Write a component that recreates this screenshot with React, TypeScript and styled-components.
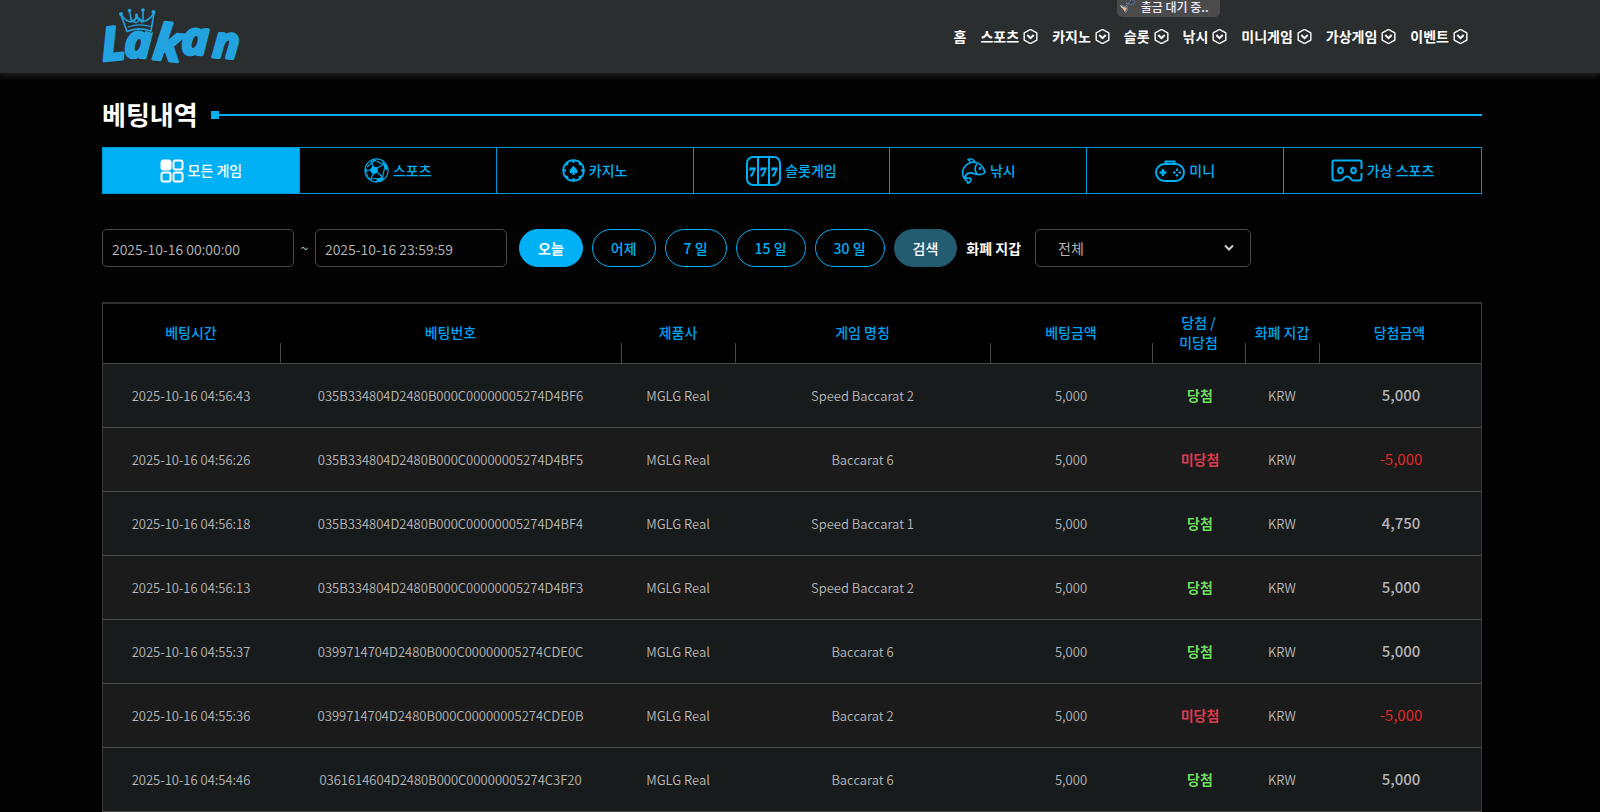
import React from 'react';
import styled, { createGlobalStyle } from 'styled-components';

const ACCENT = '#00b0f4';

const GlobalStyle = createGlobalStyle`
  *, *::before, *::after { box-sizing: border-box; }
  body {
    margin: 0;
    background: #020202;
    color: #b4b4b4;
    font-family: "Noto Sans CJK KR", "Noto Sans", sans-serif;
    font-size: 14px;
    line-height: 20px;
  }
  button, input, select { font: inherit; }
`;

const Header = styled.header`
  display: flex;
  justify-content: space-between;
  align-items: flex-start;
  height: 73px;
  padding: 0 132px 0 102px;
  background: #2a2e2f;
  box-shadow: 0 2px 8px #2a2a2a;
`;

const LogoLink = styled.a`
  display: block;
  padding-top: 6px;
  > svg {
    display: block;
    overflow: visible;
  }
`;

const NavList = styled.ul`
  display: flex;
  gap: 14px;
  margin: 0;
  padding: 26px 0 0;
  list-style: none;
`;

const NavItem = styled.li`
  position: relative;
`;

const NavLink = styled.a`
  display: flex;
  align-items: center;
  gap: 4px;
  color: #fff;
  font-weight: 700;
  white-space: nowrap;
  text-decoration: none;
`;

const StatusBadge = styled.div`
  position: absolute;
  left: -7px;
  bottom: 29px;
  display: flex;
  align-items: center;
  gap: 5px;
  height: 20px;
  padding: 0 11px 0 3px;
  border-radius: 0 0 5px 5px;
  background: #4b4b4b;
  color: #f0ecff;
  font-size: 12px;
  font-weight: 500;
  white-space: nowrap;
`;

const Main = styled.main`
  padding: 25px 118px 0 102px;
`;

const TitleRow = styled.div`
  display: flex;
  align-items: center;
  gap: 13px;
  height: 32px;
`;

const Title = styled.h1`
  margin: 0;
  color: #fff;
  font-size: 26px;
  font-weight: 700;
  line-height: 32px;
`;

const TitleRule = styled.div`
  flex: 1;
  display: flex;
  align-items: center;
  padding-top: 2px;
  &::before {
    content: '';
    width: 8px;
    height: 8px;
    background: ${ACCENT};
  }
  &::after {
    content: '';
    flex: 1;
    height: 2px;
    background: ${ACCENT};
  }
`;

const Tabs = styled.div`
  display: grid;
  grid-template-columns: repeat(7, 1fr);
  height: 47px;
  margin-top: 17px;
  border: 1px solid #0099d6;
`;

const Tab = styled.button<{ $active?: boolean }>`
  display: flex;
  align-items: center;
  justify-content: center;
  gap: 4px;
  padding: 0;
  border: 0;
  border-right: 1px solid #0099d6;
  background: ${(p) => (p.$active ? ACCENT : 'transparent')};
  color: ${(p) => (p.$active ? '#fff' : ACCENT)};
  font-weight: 500;
  cursor: pointer;
  &:last-child { border-right: 0; }
`;

const TabLabel = styled.span`
  padding-bottom: 2px;
`;

const Filters = styled.form`
  display: flex;
  align-items: center;
  gap: 9px;
  margin-top: 35px;
`;

const DateRange = styled.div`
  display: flex;
  align-items: center;
  margin-right: 3px;
`;

const DateInput = styled.input`
  width: 192px;
  height: 38px;
  padding: 2px 9px 0;
  border: 1px solid #484848;
  border-radius: 5px;
  background: transparent;
  color: #b8b8b8;
  font-weight: 350;
`;

const Tilde = styled.span`
  width: 21px;
  text-align: center;
`;

const PillButton = styled.button<{ $tone?: 'active' | 'search' }>`
  height: 38px;
  padding: 0 18px;
  border: 1px solid ${(p) => (p.$tone === 'search' ? '#235b70' : ACCENT)};
  border-radius: 19px;
  background: ${(p) =>
    p.$tone === 'active' ? ACCENT : p.$tone === 'search' ? '#235b70' : 'transparent'};
  color: ${(p) => (p.$tone ? '#fff' : ACCENT)};
  font-weight: ${(p) => (p.$tone === 'active' ? 700 : 500)};
  cursor: pointer;
`;

const WalletLabel = styled.label`
  margin-right: 5px;
  color: #fff;
  font-weight: 700;
`;

const SelectBox = styled.div`
  display: grid;
  align-items: center;
  width: 216px;
  > * { grid-area: 1 / 1; }
  > svg {
    justify-self: end;
    margin-right: 17px;
    pointer-events: none;
  }
`;

const Select = styled.select`
  width: 100%;
  height: 38px;
  padding: 0 22px;
  border: 1px solid #484848;
  border-radius: 5px;
  background: #020202;
  color: #b4b4b4;
  appearance: none;
`;

const Table = styled.table`
  width: 100%;
  margin-top: 35px;
  table-layout: fixed;
  border-collapse: separate;
  border-spacing: 0;
  border: 1px solid #3c3c3c;
  border-top: 2px solid #303030;
`;

const HeadCell = styled.th`
  height: 60px;
  padding: 0 22px 3px 20px;
  border-bottom: 1px solid #4a4a4a;
  background:
    linear-gradient(#484848, #484848) right bottom / 1px 20px no-repeat,
    #000;
  color: #00a2f2;
  font-weight: 500;
  word-break: keep-all;
  &:last-child { background: #000; }
`;

const NarrowHeadCell = styled(HeadCell)`
  padding: 0 2px 3px 0;
`;

const Row = styled.tr`
  background: #181b1c;
  &:nth-child(even) { background: #1b1b1b; }
`;

const Cell = styled.td`
  height: 64px;
  padding: 1px 2px 0 0;
  border-bottom: 1px solid #4a4a4a;
  color: #b8b8b8;
  font-size: 13px;
  font-weight: 350;
  text-align: center;
`;

const ResultCell = styled(Cell)<{ $won: boolean }>`
  padding: 0 0 1px 1px;
  color: ${(p) => (p.$won ? '#6bdc5c' : '#d93b50')};
  font-size: 14px;
  font-weight: 700;
`;

const AmountCell = styled(Cell)<{ $won: boolean }>`
  padding: 0 0 1px 1px;
  color: ${(p) => (p.$won ? '#b4b4b4' : '#e3262a')};
  font-size: 15px;
  font-weight: ${(p) => (p.$won ? 500 : 400)};
`;

const Logo = () => (
  <svg width="140" height="60" viewBox="0 0 140 60" role="img" aria-label="Lakan">
    <g
      fill="#22a3e0"
      stroke="#22a3e0"
      strokeWidth="3"
      strokeLinejoin="round"
      fontFamily="'Open Sans', sans-serif"
      fontStyle="italic"
      fontWeight="700"
    >
      <text x="1" y="55" fontSize="46" transform="rotate(-6 1 55)">L</text>
      <text x="22" y="51" fontSize="46" transform="rotate(2 22 51)">a</text>
      <text x="50" y="53" fontSize="50" transform="rotate(6 50 53)">k</text>
      <text x="79" y="48" fontSize="46" transform="rotate(2 79 48)">a</text>
      <text x="110" y="51" fontSize="44" transform="rotate(4 110 51)">n</text>
    </g>
    <path
      d="M17 6 25 25Q36 17 49 24L52 9Q48 16 42 16L41 3Q41 13 34 10Q35 15 29 13L25 4Q28 15 22 16Z"
      fill="#2a2e2f"
      stroke="#2a2e2f"
      strokeWidth="5"
      strokeLinejoin="round"
    />
    <g fill="none" stroke="#22a3e0" strokeWidth="1.6" strokeLinejoin="round" strokeLinecap="round">
      <path d="M19 9 25 25.500Q36 20.500 49 25L52 7" />
      <path d="M20 10Q26 17 30 15.500 28 9 27.500 5.500M30 15.500Q35 14 34.500 9.500 36 15 41 15.500L41 5M41 15.500Q47 15 52 7" />
      <path d="M26 21Q37 17 49 20.500M28 13 34 17 39 13M34.500 10 31 16M35 10 40 17" strokeWidth="1.2" />
    </g>
    <g fill="#22a3e0">
      <circle cx="19" cy="8" r="2" />
      <circle cx="27.500" cy="4.500" r="1.800" />
      <circle cx="34.500" cy="9" r="1.600" />
      <circle cx="41" cy="4" r="1.800" />
      <circle cx="51.500" cy="6" r="2" />
    </g>
  </svg>
);

const HexChevron = () => (
  <svg width="15" height="15" viewBox="0 0 14 14" fill="none" stroke="#fff" strokeWidth="1.3" aria-hidden>
    <path d="M7 .4 12.900 3.700V10.300L7 13.600 1.100 10.300V3.700Z" strokeLinejoin="round" />
    <path d="M4 5.600 7 8.500 10 5.600" strokeWidth="1.800" />
  </svg>
);

const HammerIcon = () => (
  <svg width="16" height="18" viewBox="0 0 16 18" aria-hidden>
    <path d="M6 5Q10 7 11 1L15 4Q14 7 8 6Z" fill="#3a4048" stroke="#63739d" />
    <path d="M1 8 7 10 5 14Z" fill="#e9b98a" />
    <path d="M1 7 5 9 7 7 7 13 5 15" fill="none" stroke="#7483ad" />
    <path d="M.5 7.500 2.500 10" stroke="#eee" />
  </svg>
);

const GridIcon = () => (
  <svg width="24" height="24" viewBox="0 0 24 24" fill="none" stroke="currentColor" strokeWidth="2" aria-hidden>
    <rect x="1.500" y="1.500" width="9" height="9" rx="2" fill="currentColor" />
    <rect x="13.500" y="1.500" width="9" height="9" rx="2" />
    <rect x="1.500" y="13.500" width="9" height="9" rx="2" />
    <rect x="13.500" y="13.500" width="9" height="9" rx="2" />
  </svg>
);

const SoccerIcon = () => (
  <svg width="25" height="25" viewBox="0 0 25 25" fill="none" stroke="currentColor" strokeWidth="1.100" aria-hidden>
    <circle cx="12.500" cy="12.500" r="11.600" />
    <g fill="currentColor" stroke="none">
      <path d="M8.500 8 13.800 9.500 14 14.500 9 16.500 5.500 12.300Z" />
      <path d="M18 2.500 23 8 23.500 13 20.500 10.500 19 6.500Z" />
      <path d="M13 20.500 18.500 19 20 20.500 16.500 23.500 12 23.500Z" />
      <path d="M6 3.500 11 1.500 12.500 3 8 4.500Z" />
      <path d="M1.500 9 3 12 2.500 16 1 12.500Z" />
      <path d="M4 18.500 7 21 8 23 4.500 20.500Z" />
    </g>
    <path d="M9 8.500 8 4.500M13.500 10 19 6.500M13.500 14.500 18.500 19M9 16 7 21M6 12.300H3M12.500 3 19 6.500M20.500 10.500 18.500 19M7 21 13 20.500M2.500 16 4 18.500M8 4.500 3 9" />
  </svg>
);

const ChipIcon = () => (
  <svg width="23" height="23" viewBox="0 0 23 23" fill="none" stroke="currentColor" aria-hidden>
    <circle cx="11.500" cy="11.500" r="10.300" strokeWidth="1.800" />
    <path
      d="M11.500 1V3.800M11.500 19.200V22M1 11.500H3.800M19.200 11.500H22M4.100 4.100 5.900 5.900M17.100 17.100 18.900 18.900M4.100 18.900 5.900 17.100M17.100 5.900 18.900 4.100"
      strokeWidth="2.400"
    />
    <path
      d="M11.500 6.500C10.500 8.500 7.500 10 7.500 12.500 7.500 14.800 10 15 11 13.800L10 16H13L12 13.800C13 15 15.500 14.800 15.500 12.500 15.500 10 12.500 8.500 11.500 6.500Z"
      fill="currentColor"
      stroke="none"
    />
  </svg>
);

const SlotIcon = () => (
  <svg width="35" height="30" viewBox="0 0 35 30" fill="none" stroke="currentColor" strokeWidth="2" aria-hidden>
    <rect x="1" y="1" width="33" height="28" rx="6" />
    <path d="M12 1V29M23 1V29" />
    <g
      fill="currentColor"
      strokeWidth="0.8"
      fontFamily="'Liberation Serif', serif"
      fontSize="13"
      fontWeight="700"
      textAnchor="middle"
    >
      <text x="6.500" y="20">7</text>
      <text x="17.500" y="20">7</text>
      <text x="28.500" y="20">7</text>
    </g>
  </svg>
);

const FishIcon = () => (
  <svg width="25" height="26" viewBox="0 0 25 26" fill="none" stroke="currentColor" strokeWidth="1.600" strokeLinejoin="round" aria-hidden>
    <path d="M10 4.500C17 3.500 22 7 24 14.500 22 16.500 18 17 14 16 9 14 5 14.500 4 19.500 6 21 9.500 19 10 21 9.500 24 7.500 25 6.500 25 6.500 23.500 5.500 22 4.500 22 0 17 0 8 10 4.500Z" />
    <path d="M10 4.500 7 1.500C10 .5 13 1.500 14 4.500" />
    <path d="M16 6C13.500 9 13.500 12.500 16 16" />
    <circle cx="19" cy="10.500" r=".6" fill="currentColor" />
  </svg>
);

const GamepadIcon = () => (
  <svg width="30" height="22" viewBox="0 0 30 22" fill="none" stroke="currentColor" strokeWidth="1.900" aria-hidden>
    <rect x="1" y="4" width="28" height="17" rx="8.500" />
    <path d="M10.500 4V1.500H19.500V4" />
    <path d="M8 9V16M4.500 12.500H11.500" strokeWidth="2.600" />
    <g fill="currentColor" stroke="none">
      <circle cx="22" cy="9.700" r="1.300" />
      <circle cx="22" cy="15.300" r="1.300" />
      <circle cx="19.200" cy="12.500" r="1.300" />
      <circle cx="24.800" cy="12.500" r="1.300" />
    </g>
  </svg>
);

const VrIcon = () => (
  <svg width="32" height="23" viewBox="0 0 32 23" fill="none" stroke="currentColor" strokeWidth="2" strokeLinejoin="round" aria-hidden>
    <path d="M30.500 10V3Q30.500 1.500 29 1.500H3Q1.500 1.500 1.500 3V19Q1.500 21.500 4 21.500H9Q11 21.500 12 20L13.500 18.500Q16 16.500 18.500 18.500L20 20Q21 21.500 23 21.500H28Q30.500 21.500 30.500 19V14" />
    <ellipse cx="9.500" cy="11.500" rx="2.300" ry="2.800" />
    <ellipse cx="22.500" cy="11.500" rx="2.300" ry="2.800" />
  </svg>
);

const navItems = ['홈', '스포츠', '카지노', '슬롯', '낚시', '미니게임', '가상게임', '이벤트'];

const tabs = [
  { label: '모든 게임', Icon: GridIcon },
  { label: '스포츠', Icon: SoccerIcon },
  { label: '카지노', Icon: ChipIcon },
  { label: '슬롯게임', Icon: SlotIcon },
  { label: '낚시', Icon: FishIcon },
  { label: '미니', Icon: GamepadIcon },
  { label: '가상 스포츠', Icon: VrIcon },
];

const columnWidths = [178, 341, 114, 255, 162, 93, 74, 161];

const bets = [
  { time: '2025-10-16 04:56:43', id: '035B334804D2480B000C00000005274D4BF6', game: 'Speed Baccarat 2', won: true, payout: '5,000' },
  { time: '2025-10-16 04:56:26', id: '035B334804D2480B000C00000005274D4BF5', game: 'Baccarat 6', won: false, payout: '-5,000' },
  { time: '2025-10-16 04:56:18', id: '035B334804D2480B000C00000005274D4BF4', game: 'Speed Baccarat 1', won: true, payout: '4,750' },
  { time: '2025-10-16 04:56:13', id: '035B334804D2480B000C00000005274D4BF3', game: 'Speed Baccarat 2', won: true, payout: '5,000' },
  { time: '2025-10-16 04:55:37', id: '0399714704D2480B000C00000005274CDE0C', game: 'Baccarat 6', won: true, payout: '5,000' },
  { time: '2025-10-16 04:55:36', id: '0399714704D2480B000C00000005274CDE0B', game: 'Baccarat 2', won: false, payout: '-5,000' },
  { time: '2025-10-16 04:54:46', id: '0361614604D2480B000C00000005274C3F20', game: 'Baccarat 6', won: true, payout: '5,000' },
];

export default function App() {
  return (
    <>
      <GlobalStyle />
      <Header>
        <LogoLink href="#">
          <Logo />
        </LogoLink>
        <nav>
          <NavList>
            {navItems.map((label) => (
              <NavItem key={label}>
                <NavLink href="#">
                  {label}
                  {label !== '홈' && <HexChevron />}
                </NavLink>
                {label === '슬롯' && (
                  <StatusBadge>
                    <HammerIcon />
                    출금 대기 중..
                  </StatusBadge>
                )}
              </NavItem>
            ))}
          </NavList>
        </nav>
      </Header>
      <Main>
        <TitleRow>
          <Title>베팅내역</Title>
          <TitleRule />
        </TitleRow>
        <Tabs>
          {tabs.map(({ label, Icon }, i) => (
            <Tab key={label} type="button" $active={i === 0}>
              <Icon />
              <TabLabel>{label}</TabLabel>
            </Tab>
          ))}
        </Tabs>
        <Filters onSubmit={(e) => e.preventDefault()}>
          <DateRange>
            <DateInput aria-label="시작 시간" defaultValue="2025-10-16 00:00:00" />
            <Tilde>~</Tilde>
            <DateInput aria-label="종료 시간" defaultValue="2025-10-16 23:59:59" />
          </DateRange>
          <PillButton type="button" $tone="active">오늘</PillButton>
          <PillButton type="button">어제</PillButton>
          <PillButton type="button">7 일</PillButton>
          <PillButton type="button">15 일</PillButton>
          <PillButton type="button">30 일</PillButton>
          <PillButton type="submit" $tone="search">검색</PillButton>
          <WalletLabel htmlFor="wallet">화폐 지갑</WalletLabel>
          <SelectBox>
            <Select id="wallet">
              <option>전체</option>
            </Select>
            <svg width="10" height="8" viewBox="0 0 10 8" fill="none" stroke="#d0d0d0" strokeWidth="2" aria-hidden>
              <path d="M1 1.500 5 5.500 9 1.500" />
            </svg>
          </SelectBox>
        </Filters>
        <Table>
          <colgroup>
            {columnWidths.map((width, i) => (
              <col key={i} width={width} />
            ))}
          </colgroup>
          <thead>
            <tr>
              <HeadCell>베팅시간</HeadCell>
              <HeadCell>베팅번호</HeadCell>
              <HeadCell>제품사</HeadCell>
              <HeadCell>게임 명칭</HeadCell>
              <HeadCell>베팅금액</HeadCell>
              <HeadCell>당첨 / 미당첨</HeadCell>
              <NarrowHeadCell>화폐 지갑</NarrowHeadCell>
              <HeadCell>당첨금액</HeadCell>
            </tr>
          </thead>
          <tbody>
            {bets.map((bet) => (
              <Row key={bet.id}>
                <Cell>{bet.time}</Cell>
                <Cell>{bet.id}</Cell>
                <Cell>MGLG Real</Cell>
                <Cell>{bet.game}</Cell>
                <Cell>5,000</Cell>
                <ResultCell $won={bet.won}>{bet.won ? '당첨' : '미당첨'}</ResultCell>
                <Cell>KRW</Cell>
                <AmountCell $won={bet.won}>{bet.payout}</AmountCell>
              </Row>
            ))}
          </tbody>
        </Table>
      </Main>
    </>
  );
}
